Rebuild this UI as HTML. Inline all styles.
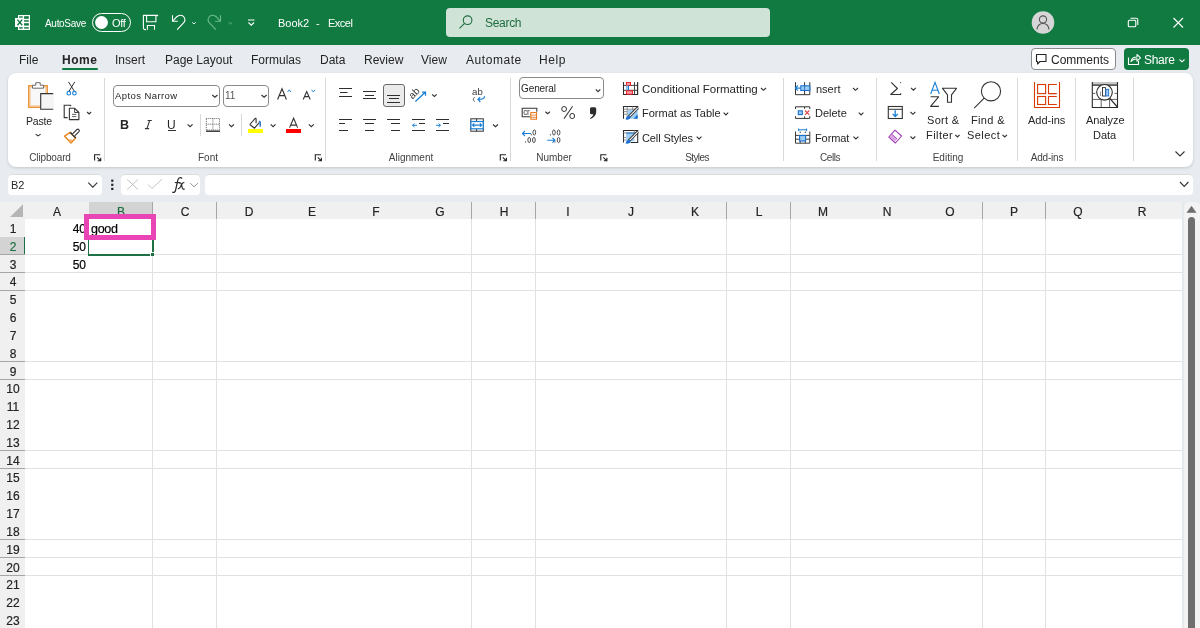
<!DOCTYPE html><html><head><meta charset="utf-8"><style>
html,body{margin:0;padding:0;width:1200px;height:628px;overflow:hidden;background:#e8ebef}
.a{position:absolute}
.t{position:absolute;white-space:pre;line-height:1;font-family:"Liberation Sans",sans-serif;will-change:transform}
svg{position:absolute;overflow:visible}
</style></head><body>
<div class="a" style="left:0px;top:0px;width:1200px;height:628px;background:#e8ecf0;"></div>
<div class="a" style="left:0px;top:0px;width:1200px;height:44.5px;background:#117a41;"></div>
<span class="t" style="left:45.00px;top:18.54px;font-size:10px;color:#fff;letter-spacing:-0.3px;">AutoSave</span>
<div class="a" style="left:92px;top:13.3px;width:39px;height:18.5px;background:transparent;border:1.3px solid #fff;border-radius:10px;box-sizing:border-box;"></div>
<span class="t" style="left:112.00px;top:17.69px;font-size:11px;color:#fff;letter-spacing:-0.3px;">Off</span>
<span class="t" style="left:278.30px;top:17.79px;font-size:11px;color:#fff;">Book2</span>
<span class="t" style="left:316.40px;top:17.79px;font-size:11px;color:#fff;">-</span>
<span class="t" style="left:328.40px;top:17.79px;font-size:11px;color:#fff;letter-spacing:-0.5px;">Excel</span>
<div class="a" style="left:446px;top:8px;width:324px;height:29px;background:#d0e3d7;border-radius:4px;"></div>
<span class="t" style="left:485.00px;top:16.84px;font-size:12px;color:#1d6b3e;letter-spacing:-0.3px;">Search</span>
<span class="t" style="left:19.20px;top:53.84px;font-size:12px;color:#242424;">File</span>
<span class="t" style="left:61.60px;top:53.84px;font-size:12px;color:#242424;font-weight:bold;letter-spacing:0.5px;">Home</span>
<span class="t" style="left:114.60px;top:53.84px;font-size:12px;color:#242424;">Insert</span>
<span class="t" style="left:164.80px;top:53.84px;font-size:12px;color:#242424;">Page Layout</span>
<span class="t" style="left:251.20px;top:53.84px;font-size:12px;color:#242424;">Formulas</span>
<span class="t" style="left:320.20px;top:53.84px;font-size:12px;color:#242424;">Data</span>
<span class="t" style="left:364.20px;top:53.84px;font-size:12px;color:#242424;">Review</span>
<span class="t" style="left:420.60px;top:53.84px;font-size:12px;color:#242424;">View</span>
<span class="t" style="left:465.90px;top:53.84px;font-size:12px;color:#242424;letter-spacing:0.55px;">Automate</span>
<span class="t" style="left:538.70px;top:53.84px;font-size:12px;color:#242424;letter-spacing:0.6px;">Help</span>
<div class="a" style="left:62px;top:68px;width:36px;height:2.2px;background:#117a41;border-radius:1px;"></div>
<div class="a" style="left:1031px;top:48px;width:85px;height:22px;background:#fff;border:1px solid #8a8a8a;border-radius:4px;box-sizing:border-box;"></div>
<span class="t" style="left:1050.50px;top:53.84px;font-size:12px;color:#242424;">Comments</span>
<div class="a" style="left:1124px;top:48px;width:65px;height:22px;background:#117a41;border-radius:4px;"></div>
<span class="t" style="left:1143.50px;top:53.84px;font-size:12px;color:#fff;letter-spacing:-0.3px;">Share</span>
<div class="a" style="left:8px;top:73px;width:1185px;height:93.5px;background:#fff;border-radius:8px;box-shadow:0 1px 3px rgba(0,0,0,0.16);"></div>
<div class="a" style="left:8px;top:174px;width:94px;height:21px;background:#fff;border-radius:4px;box-shadow:inset 0 1px 0 #dcdcdc;"></div>
<div class="a" style="left:121px;top:174px;width:79px;height:21px;background:#fff;border-radius:4px;box-shadow:inset 0 1px 0 #dcdcdc;"></div>
<div class="a" style="left:204.5px;top:174px;width:988px;height:21px;background:#fff;border-radius:4px;box-shadow:inset 0 1px 0 #dcdcdc;"></div>
<div class="a" style="left:0px;top:202px;width:1182.5px;height:426px;background:#fff;"></div>
<div class="a" style="left:0px;top:202px;width:1182.5px;height:16.5px;background:#f0f0f0;"></div>
<div class="a" style="left:0px;top:202px;width:25px;height:426px;background:#f0f0f0;"></div>
<div class="a" style="left:89px;top:202px;width:63.6px;height:16.5px;background:#d3d3d3;"></div>
<div class="a" style="left:0px;top:237px;width:25px;height:17.4px;background:#d3d3d3;"></div>
<div class="a" style="left:24px;top:237px;width:1.2px;height:17.4px;background:#1e7145;"></div>
<span class="t" style="left:-42.80px;width:200px;text-align:center;top:205.94px;font-size:12px;color:#242424;-webkit-text-stroke:0.2px #242424;">A</span>
<span class="t" style="left:21.00px;width:200px;text-align:center;top:205.94px;font-size:12px;color:#1e6e42;-webkit-text-stroke:0.2px #1e6e42;">B</span>
<span class="t" style="left:84.80px;width:200px;text-align:center;top:205.94px;font-size:12px;color:#242424;-webkit-text-stroke:0.2px #242424;">C</span>
<span class="t" style="left:148.60px;width:200px;text-align:center;top:205.94px;font-size:12px;color:#242424;-webkit-text-stroke:0.2px #242424;">D</span>
<span class="t" style="left:212.40px;width:200px;text-align:center;top:205.94px;font-size:12px;color:#242424;-webkit-text-stroke:0.2px #242424;">E</span>
<span class="t" style="left:276.20px;width:200px;text-align:center;top:205.94px;font-size:12px;color:#242424;-webkit-text-stroke:0.2px #242424;">F</span>
<span class="t" style="left:340.00px;width:200px;text-align:center;top:205.94px;font-size:12px;color:#242424;-webkit-text-stroke:0.2px #242424;">G</span>
<span class="t" style="left:403.80px;width:200px;text-align:center;top:205.94px;font-size:12px;color:#242424;-webkit-text-stroke:0.2px #242424;">H</span>
<span class="t" style="left:467.60px;width:200px;text-align:center;top:205.94px;font-size:12px;color:#242424;-webkit-text-stroke:0.2px #242424;">I</span>
<span class="t" style="left:531.40px;width:200px;text-align:center;top:205.94px;font-size:12px;color:#242424;-webkit-text-stroke:0.2px #242424;">J</span>
<span class="t" style="left:595.20px;width:200px;text-align:center;top:205.94px;font-size:12px;color:#242424;-webkit-text-stroke:0.2px #242424;">K</span>
<span class="t" style="left:659.00px;width:200px;text-align:center;top:205.94px;font-size:12px;color:#242424;-webkit-text-stroke:0.2px #242424;">L</span>
<span class="t" style="left:722.80px;width:200px;text-align:center;top:205.94px;font-size:12px;color:#242424;-webkit-text-stroke:0.2px #242424;">M</span>
<span class="t" style="left:786.60px;width:200px;text-align:center;top:205.94px;font-size:12px;color:#242424;-webkit-text-stroke:0.2px #242424;">N</span>
<span class="t" style="left:850.40px;width:200px;text-align:center;top:205.94px;font-size:12px;color:#242424;-webkit-text-stroke:0.2px #242424;">O</span>
<span class="t" style="left:914.20px;width:200px;text-align:center;top:205.94px;font-size:12px;color:#242424;-webkit-text-stroke:0.2px #242424;">P</span>
<span class="t" style="left:978.00px;width:200px;text-align:center;top:205.94px;font-size:12px;color:#242424;-webkit-text-stroke:0.2px #242424;">Q</span>
<span class="t" style="left:1041.80px;width:200px;text-align:center;top:205.94px;font-size:12px;color:#242424;-webkit-text-stroke:0.2px #242424;">R</span>
<span class="t" style="left:-87.50px;width:200px;text-align:center;top:223.04px;font-size:12px;color:#242424;-webkit-text-stroke:0.2px #242424;">1</span>
<span class="t" style="left:-87.50px;width:200px;text-align:center;top:240.86px;font-size:12px;color:#1e6e42;-webkit-text-stroke:0.2px #1e6e42;">2</span>
<span class="t" style="left:-87.50px;width:200px;text-align:center;top:258.67px;font-size:12px;color:#242424;-webkit-text-stroke:0.2px #242424;">3</span>
<span class="t" style="left:-87.50px;width:200px;text-align:center;top:276.49px;font-size:12px;color:#242424;-webkit-text-stroke:0.2px #242424;">4</span>
<span class="t" style="left:-87.50px;width:200px;text-align:center;top:294.30px;font-size:12px;color:#242424;-webkit-text-stroke:0.2px #242424;">5</span>
<span class="t" style="left:-87.50px;width:200px;text-align:center;top:312.12px;font-size:12px;color:#242424;-webkit-text-stroke:0.2px #242424;">6</span>
<span class="t" style="left:-87.50px;width:200px;text-align:center;top:329.93px;font-size:12px;color:#242424;-webkit-text-stroke:0.2px #242424;">7</span>
<span class="t" style="left:-87.50px;width:200px;text-align:center;top:347.75px;font-size:12px;color:#242424;-webkit-text-stroke:0.2px #242424;">8</span>
<span class="t" style="left:-87.50px;width:200px;text-align:center;top:365.56px;font-size:12px;color:#242424;-webkit-text-stroke:0.2px #242424;">9</span>
<span class="t" style="left:-87.50px;width:200px;text-align:center;top:383.38px;font-size:12px;color:#242424;-webkit-text-stroke:0.2px #242424;">10</span>
<span class="t" style="left:-87.50px;width:200px;text-align:center;top:401.19px;font-size:12px;color:#242424;-webkit-text-stroke:0.2px #242424;">11</span>
<span class="t" style="left:-87.50px;width:200px;text-align:center;top:419.01px;font-size:12px;color:#242424;-webkit-text-stroke:0.2px #242424;">12</span>
<span class="t" style="left:-87.50px;width:200px;text-align:center;top:436.82px;font-size:12px;color:#242424;-webkit-text-stroke:0.2px #242424;">13</span>
<span class="t" style="left:-87.50px;width:200px;text-align:center;top:454.64px;font-size:12px;color:#242424;-webkit-text-stroke:0.2px #242424;">14</span>
<span class="t" style="left:-87.50px;width:200px;text-align:center;top:472.45px;font-size:12px;color:#242424;-webkit-text-stroke:0.2px #242424;">15</span>
<span class="t" style="left:-87.50px;width:200px;text-align:center;top:490.27px;font-size:12px;color:#242424;-webkit-text-stroke:0.2px #242424;">16</span>
<span class="t" style="left:-87.50px;width:200px;text-align:center;top:508.08px;font-size:12px;color:#242424;-webkit-text-stroke:0.2px #242424;">17</span>
<span class="t" style="left:-87.50px;width:200px;text-align:center;top:525.90px;font-size:12px;color:#242424;-webkit-text-stroke:0.2px #242424;">18</span>
<span class="t" style="left:-87.50px;width:200px;text-align:center;top:543.71px;font-size:12px;color:#242424;-webkit-text-stroke:0.2px #242424;">19</span>
<span class="t" style="left:-87.50px;width:200px;text-align:center;top:561.53px;font-size:12px;color:#242424;-webkit-text-stroke:0.2px #242424;">20</span>
<span class="t" style="left:-87.50px;width:200px;text-align:center;top:579.34px;font-size:12px;color:#242424;-webkit-text-stroke:0.2px #242424;">21</span>
<span class="t" style="left:-87.50px;width:200px;text-align:center;top:597.16px;font-size:12px;color:#242424;-webkit-text-stroke:0.2px #242424;">22</span>
<span class="t" style="left:-87.50px;width:200px;text-align:center;top:614.97px;font-size:12px;color:#242424;-webkit-text-stroke:0.2px #242424;">23</span>
<div class="a" style="left:152.1px;top:218.5px;width:1px;height:410px;background:#e1e1e1;"></div>
<div class="a" style="left:152.1px;top:202px;width:1px;height:16.5px;background:#a6a6a6;"></div>
<div class="a" style="left:215.9px;top:218.5px;width:1px;height:410px;background:#e1e1e1;"></div>
<div class="a" style="left:215.9px;top:202px;width:1px;height:16.5px;background:#a6a6a6;"></div>
<div class="a" style="left:471.1px;top:218.5px;width:1px;height:410px;background:#e1e1e1;"></div>
<div class="a" style="left:471.1px;top:202px;width:1px;height:16.5px;background:#a6a6a6;"></div>
<div class="a" style="left:534.9px;top:218.5px;width:1px;height:410px;background:#e1e1e1;"></div>
<div class="a" style="left:534.9px;top:202px;width:1px;height:16.5px;background:#a6a6a6;"></div>
<div class="a" style="left:726.3px;top:218.5px;width:1px;height:410px;background:#e1e1e1;"></div>
<div class="a" style="left:726.3px;top:202px;width:1px;height:16.5px;background:#a6a6a6;"></div>
<div class="a" style="left:790.1px;top:218.5px;width:1px;height:410px;background:#e1e1e1;"></div>
<div class="a" style="left:790.1px;top:202px;width:1px;height:16.5px;background:#a6a6a6;"></div>
<div class="a" style="left:981.5px;top:218.5px;width:1px;height:410px;background:#e1e1e1;"></div>
<div class="a" style="left:981.5px;top:202px;width:1px;height:16.5px;background:#a6a6a6;"></div>
<div class="a" style="left:1045.3px;top:218.5px;width:1px;height:410px;background:#e1e1e1;"></div>
<div class="a" style="left:1045.3px;top:202px;width:1px;height:16.5px;background:#a6a6a6;"></div>
<div class="a" style="left:25px;top:254.1px;width:1157.5px;height:1px;background:#e1e1e1;"></div>
<div class="a" style="left:0px;top:254.1px;width:25px;height:1px;background:#a6a6a6;"></div>
<div class="a" style="left:25px;top:271.9px;width:1157.5px;height:1px;background:#e1e1e1;"></div>
<div class="a" style="left:0px;top:271.9px;width:25px;height:1px;background:#a6a6a6;"></div>
<div class="a" style="left:25px;top:289.8px;width:1157.5px;height:1px;background:#e1e1e1;"></div>
<div class="a" style="left:0px;top:289.8px;width:25px;height:1px;background:#a6a6a6;"></div>
<div class="a" style="left:25px;top:361.0px;width:1157.5px;height:1px;background:#e1e1e1;"></div>
<div class="a" style="left:0px;top:361.0px;width:25px;height:1px;background:#a6a6a6;"></div>
<div class="a" style="left:25px;top:378.8px;width:1157.5px;height:1px;background:#e1e1e1;"></div>
<div class="a" style="left:0px;top:378.8px;width:25px;height:1px;background:#a6a6a6;"></div>
<div class="a" style="left:25px;top:450.1px;width:1157.5px;height:1px;background:#e1e1e1;"></div>
<div class="a" style="left:0px;top:450.1px;width:25px;height:1px;background:#a6a6a6;"></div>
<div class="a" style="left:25px;top:467.9px;width:1157.5px;height:1px;background:#e1e1e1;"></div>
<div class="a" style="left:0px;top:467.9px;width:25px;height:1px;background:#a6a6a6;"></div>
<div class="a" style="left:25px;top:539.2px;width:1157.5px;height:1px;background:#e1e1e1;"></div>
<div class="a" style="left:0px;top:539.2px;width:25px;height:1px;background:#a6a6a6;"></div>
<div class="a" style="left:25px;top:557.0px;width:1157.5px;height:1px;background:#e1e1e1;"></div>
<div class="a" style="left:0px;top:557.0px;width:25px;height:1px;background:#a6a6a6;"></div>
<div class="a" style="left:25px;top:574.8px;width:1157.5px;height:1px;background:#e1e1e1;"></div>
<div class="a" style="left:0px;top:574.8px;width:25px;height:1px;background:#a6a6a6;"></div>
<div class="a" style="left:1182px;top:202px;width:2px;height:426px;background:#e6e9ec;"></div>
<div class="a" style="left:1184px;top:202px;width:16px;height:426px;background:#f3f3f3;border-radius:5px 5px 0 0;"></div>
<div class="a" style="left:1188px;top:216.6px;width:7px;height:420px;background:#6e6e6e;border-radius:3.5px 3.5px 0 0;"></div>
<span class="t" style="left:-113.70px;width:200px;text-align:right;top:223.34px;font-size:12px;color:#000;-webkit-text-stroke:0.2px #000;">40</span>
<span class="t" style="left:-113.70px;width:200px;text-align:right;top:241.14px;font-size:12px;color:#000;-webkit-text-stroke:0.2px #000;">50</span>
<span class="t" style="left:-113.70px;width:200px;text-align:right;top:258.94px;font-size:12px;color:#000;-webkit-text-stroke:0.2px #000;">50</span>
<span class="t" style="left:90.50px;top:223.32px;font-size:12.5px;color:#000;letter-spacing:-0.3px;-webkit-text-stroke:0.2px #000;">good</span>
<div class="a" style="left:88px;top:236px;width:1.3px;height:19.8px;background:#1e7145;"></div>
<div class="a" style="left:88px;top:254px;width:61.8px;height:2px;background:#1e7145;"></div>
<div class="a" style="left:152px;top:236px;width:2px;height:15.8px;background:#1e7145;"></div>
<div class="a" style="left:151px;top:253px;width:3px;height:3px;background:#1e7145;"></div>
<div class="a" style="left:84px;top:214px;width:72px;height:26px;background:transparent;border:5px solid #ea45b4;box-sizing:border-box;"></div>
<div class="a" style="left:104.1px;top:78px;width:1px;height:83px;background:#d9d9d9;"></div>
<div class="a" style="left:325.3px;top:78px;width:1px;height:83px;background:#d9d9d9;"></div>
<div class="a" style="left:510.3px;top:78px;width:1px;height:83px;background:#d9d9d9;"></div>
<div class="a" style="left:783.0px;top:78px;width:1px;height:83px;background:#d9d9d9;"></div>
<div class="a" style="left:875.8px;top:78px;width:1px;height:83px;background:#d9d9d9;"></div>
<div class="a" style="left:1016.7px;top:78px;width:1px;height:83px;background:#d9d9d9;"></div>
<div class="a" style="left:1075.1px;top:78px;width:1px;height:83px;background:#d9d9d9;"></div>
<div class="a" style="left:1133.2px;top:78px;width:1px;height:83px;background:#d9d9d9;"></div>
<span class="t" style="left:-49.60px;width:200px;text-align:center;top:152.84px;font-size:10px;color:#424242;letter-spacing:-0.15px;">Clipboard</span>
<span class="t" style="left:108.20px;width:200px;text-align:center;top:152.84px;font-size:10px;color:#424242;letter-spacing:0px;">Font</span>
<span class="t" style="left:310.50px;width:200px;text-align:center;top:152.84px;font-size:10px;color:#424242;letter-spacing:0px;">Alignment</span>
<span class="t" style="left:453.50px;width:200px;text-align:center;top:152.84px;font-size:10px;color:#424242;letter-spacing:0px;">Number</span>
<span class="t" style="left:597.40px;width:200px;text-align:center;top:152.84px;font-size:10px;color:#424242;letter-spacing:-0.6px;">Styles</span>
<span class="t" style="left:729.50px;width:200px;text-align:center;top:152.84px;font-size:10px;color:#424242;letter-spacing:-0.45px;">Cells</span>
<span class="t" style="left:847.50px;width:200px;text-align:center;top:152.84px;font-size:10px;color:#424242;letter-spacing:0px;">Editing</span>
<span class="t" style="left:946.80px;width:200px;text-align:center;top:152.84px;font-size:10px;color:#424242;letter-spacing:-0.2px;">Add-ins</span>
<span class="t" style="left:25.70px;top:115.91px;font-size:10.5px;color:#262626;letter-spacing:-0.2px;">Paste</span>
<div class="a" style="left:113px;top:84.5px;width:107.3px;height:22px;background:#fff;border:1px solid #8a8a8a;border-radius:4px;box-sizing:border-box;"></div>
<span class="t" style="left:115.00px;top:90.96px;font-size:9.5px;color:#262626;letter-spacing:0.42px;">Aptos Narrow</span>
<div class="a" style="left:223.3px;top:84.5px;width:46.2px;height:22px;background:#fff;border:1px solid #8a8a8a;border-radius:4px;box-sizing:border-box;"></div>
<span class="t" style="left:225.20px;top:90.53px;font-size:10px;color:#555;">11</span>
<span class="t" style="left:120.00px;top:118.52px;font-size:12.5px;color:#262626;font-weight:bold;">B</span>
<span class="t" style="left:167.20px;top:118.94px;font-size:12px;color:#262626;">U</span>
<div class="a" style="left:168px;top:130.2px;width:8px;height:1px;background:#333;"></div>
<div class="a" style="left:200px;top:114px;width:1px;height:22.3px;background:#d9d9d9;"></div>
<div class="a" style="left:241px;top:114.3px;width:1px;height:22px;background:#d9d9d9;"></div>
<div class="a" style="left:248px;top:129px;width:15px;height:3.8px;background:#ffff00;"></div>
<div class="a" style="left:286px;top:129px;width:15px;height:3.8px;background:#ff0000;"></div>
<div class="a" style="left:383.3px;top:84.2px;width:21.5px;height:22.5px;background:#ebebeb;border:1px solid #6a6a6a;border-radius:3px;box-sizing:border-box;"></div>
<div class="a" style="left:519.4px;top:77.3px;width:84.2px;height:21.5px;background:#fff;border:1px solid #8a8a8a;border-radius:4px;box-sizing:border-box;"></div>
<span class="t" style="left:521.00px;top:83.94px;font-size:10px;color:#262626;letter-spacing:-0.1px;">General</span>
<span class="t" style="left:641.50px;top:84.27px;font-size:11.5px;color:#262626;">Conditional Formatting</span>
<span class="t" style="left:641.50px;top:108.19px;font-size:11px;color:#262626;">Format as Table</span>
<span class="t" style="left:641.50px;top:132.79px;font-size:11px;color:#262626;letter-spacing:-0.1px;">Cell Styles</span>
<span class="t" style="left:816.30px;top:84.49px;font-size:11px;color:#262626;">nsert</span>
<span class="t" style="left:814.50px;top:108.19px;font-size:11px;color:#262626;">Delete</span>
<span class="t" style="left:814.50px;top:132.79px;font-size:11px;color:#262626;letter-spacing:-0.1px;">Format</span>
<span class="t" style="left:927.30px;top:114.89px;font-size:11px;color:#262626;letter-spacing:0.3px;">Sort &amp;</span>
<span class="t" style="left:926.20px;top:129.69px;font-size:11px;color:#262626;letter-spacing:0.45px;">Filter</span>
<span class="t" style="left:970.50px;top:114.89px;font-size:11px;color:#262626;letter-spacing:0.35px;">Find &amp;</span>
<span class="t" style="left:967.30px;top:129.69px;font-size:11px;color:#262626;letter-spacing:0.45px;">Select</span>
<span class="t" style="left:1027.50px;top:114.69px;font-size:11px;color:#262626;">Add-ins</span>
<span class="t" style="left:1086.00px;top:114.69px;font-size:11px;color:#262626;letter-spacing:-0.1px;">Analyze</span>
<span class="t" style="left:1093.30px;top:129.69px;font-size:11px;color:#262626;">Data</span>
<span class="t" style="left:11.20px;top:180.09px;font-size:11px;color:#262626;">B2</span>
<svg class="a" style="left:0;top:0" width="1200" height="628" viewBox="0 0 1200 628"><path d="M18 15h12v15h-12v-3h-3v-9h3z" fill="#fff"/><g fill="#117a41"><rect x="19.2" y="16.3" width="3.5" height="1.4"/><rect x="19.2" y="27.2" width="3.5" height="1.4"/><rect x="24.1" y="16.2" width="4.7" height="2.6"/><rect x="24.1" y="20.2" width="4.7" height="1.5"/><rect x="24.1" y="23.2" width="4.7" height="2.4"/><rect x="24.1" y="27.2" width="4.7" height="1.4"/></g><path d="M17.4 19.6l4.8 5.6M22.2 19.6l-4.8 5.6" stroke="#117a41" stroke-width="1.4"/><circle cx="101.5" cy="22.5" r="6.4" fill="#fff"/><path d="M157.6 16.3v-0.9h-14.2v12.4a1.8 1.8 0 0 0 1.8 1.8h0.8M146.6 15.5v6.2h9.3v-6.2M147.4 29.7v-4.2h7.1v4.2" fill="none" stroke="#fff" stroke-width="1.1"/><path d="M172.5 15.2v6h5.3" fill="none" stroke="#fff" stroke-width="1.1"/><path d="M173 20.8l3.5-3.8c2.5-2.5 6-2.3 7.6 0.2 1.3 2 1 4-0.6 5.8l-6.3 6.6" fill="none" stroke="#fff" stroke-width="1.1"/><path d="M192.2 22.3l1.8 1.7 1.8-1.7" fill="none" stroke="#fff" stroke-width="0.9"/><path d="M220.5 15.2v6h-5.3" fill="none" stroke="#6cba8d" stroke-width="1.1"/><path d="M220 20.8l-3.5-3.8c-2.5-2.5-6-2.3-7.6 0.2-1.3 2-1 4 0.6 5.8l6.3 6.6" fill="none" stroke="#6cba8d" stroke-width="1.1"/><path d="M228.6 22.3l1.8 1.7 1.8-1.7" fill="none" stroke="#6cba8d" stroke-width="0.9"/><path d="M248 20h6.5M248.5 22.5l2.75 2.75 2.75-2.75" fill="none" stroke="#fff" stroke-width="1.1"/><circle cx="467.6" cy="20.2" r="4.3" fill="none" stroke="#1d6b3e" stroke-width="1.1"/><path d="M464.5 23.3l-5 5" stroke="#1d6b3e" stroke-width="1.1"/><circle cx="1043" cy="22.5" r="11.3" fill="#d6d6d6"/><circle cx="1043" cy="19.5" r="3.6" fill="none" stroke="#555" stroke-width="1.1"/><path d="M1037 29.5c0.5-4 2.5-6 6-6s5.5 2 6 6" fill="none" stroke="#555" stroke-width="1.1"/><rect x="1128.3" y="20.3" width="7.5" height="6.5" rx="1" fill="none" stroke="#fff" stroke-width="1.1"/><path d="M1130.5 18.3h5.5a1.8 1.8 0 0 1 1.8 1.8v5" fill="none" stroke="#fff" stroke-width="1.1"/><path d="M1173.5 18l9.5 9.5M1183 18l-9.5 9.5" stroke="#fff" stroke-width="1.1"/><path d="M1036.5 54.5h9.5v7h-6l-2.5 2.5v-2.5h-1z" fill="none" stroke="#242424" stroke-width="1.1" stroke-linejoin="round"/><path d="M1128.5 57.5v7h10v-3.5" fill="none" stroke="#fff" stroke-width="1.1"/><path d="M1131 61.5c0.5-3 2.5-4.5 6-4.5v-2.5l3.5 3.3-3.5 3.3v-2.3c-2.5 0-4.5 1-6 2.7z" fill="none" stroke="#fff" stroke-width="1.1" stroke-linejoin="round"/><path d="M1179.5 59.5l2.5 2.3 2.5-2.3" fill="none" stroke="#fff" stroke-width="1.1"/><path d="M10 217h13v-12.8z" fill="#b5b5b5"/><path d="M1187 212.5l4.5-6.3 4.5 6.3z" fill="#6e6e6e" stroke="#6e6e6e" stroke-width="0.6" stroke-linejoin="round"/><path d="M94.6 160.6v-5.8h5.6M97.1 157.3l3.6 3.6M97.6 160.8h3.1v-3.1" fill="none" stroke="#222" stroke-width="1.1"/><path d="M315.3 160.6v-5.8h5.6M317.8 157.3l3.6 3.6M318.3 160.8h3.1v-3.1" fill="none" stroke="#222" stroke-width="1.1"/><path d="M500.3 160.6v-5.8h5.6M502.8 157.3l3.6 3.6M503.3 160.8h3.1v-3.1" fill="none" stroke="#222" stroke-width="1.1"/><path d="M600.8 160.6v-5.8h5.6M603.3 157.3l3.6 3.6M603.8 160.8h3.1v-3.1" fill="none" stroke="#222" stroke-width="1.1"/><rect x="28.8" y="85.8" width="18.4" height="21.4" fill="#f8f8f8" stroke="#e8841a" stroke-width="1.3"/><rect x="30.2" y="87.2" width="15.6" height="18.6" fill="none" stroke="#f6c98f" stroke-width="0.8"/><path d="M32.5 88.2v-3h3.3v-2.5h4.4v2.5h3.3v3z" fill="#fff" stroke="#6a6a6a" stroke-width="1.0" stroke-linejoin="round"/><path d="M54 93.6h-13.3v15.6h13.3z" fill="#f5f5f5"/><path d="M53.2 93.6h-12.5v15.6h12.5" fill="none" stroke="#333" stroke-width="1.1"/><path d="M35.6 134.1l2.5 1.8 2.5 -1.8" fill="none" stroke="#333" stroke-width="1.15"/><path d="M68.5 81.8l5.8 9.4M74.8 81.8l-5.8 9.4" stroke="#333" stroke-width="1.0" fill="none"/><circle cx="68.8" cy="93.2" r="1.8" fill="none" stroke="#1a7fd4" stroke-width="1.1"/><circle cx="74.4" cy="93.2" r="1.8" fill="none" stroke="#1a7fd4" stroke-width="1.1"/><path d="M67.6 117.6h-3.4v-12.3h6.2l0.6 0.8" fill="none" stroke="#333" stroke-width="1.1"/><path d="M69.4 108.3h5.3l4.2 4.2v7.1h-9.5z" fill="#fff" stroke="#333" stroke-width="1.1" stroke-linejoin="round"/><path d="M74.6 108.3v4.2h4.2" fill="none" stroke="#333" stroke-width="0.9"/><path d="M72 114.4h4.3M72 116.6h4.3" stroke="#555" stroke-width="0.9"/><path d="M87.1 112l2.0 1.9 2.0 -1.9" fill="none" stroke="#333" stroke-width="1.15"/><path d="M70.2 132.4l-5.6 3.8 6.4 6.8 4.6-5z" fill="#fff" stroke="#e8841a" stroke-width="1.4" stroke-linejoin="round"/><path d="M67.8 139.2l3.2 3.4 1.6-3.2z" fill="#f5b56a"/><path d="M70.2 132.3l5.5 5.8" stroke="#333" stroke-width="1.4"/><path d="M72.6 133.8l4.3-4.3a1.5 1.5 0 0 1 2.1 2.1l-4.3 4.3" fill="#fff" stroke="#333" stroke-width="1.1"/><path d="M212.3 95l2.6 2.3 2.6 -2.3" fill="none" stroke="#333" stroke-width="1.15"/><path d="M261.5 95l2.6 2.3 2.6 -2.3" fill="none" stroke="#333" stroke-width="1.15"/><path d="M277.6 99.5l4.4-10.7 4.4 10.7M279.3 95.6h5.4" fill="none" stroke="#333" stroke-width="1.15"/><path d="M287.6 92l1.6-2.2 1.6 2.2" fill="none" stroke="#1a7fd4" stroke-width="0.9"/><path d="M303.2 99.5l3.5-8 3.5 8M304.5 96.6h4.4" fill="none" stroke="#333" stroke-width="1.1"/><path d="M311.5 89.8l1.8 2.2 1.8-2.2" fill="none" stroke="#1a7fd4" stroke-width="0.9"/><path d="M149.6 120.6l-2.6 8M147.6 120.5h4.2M144.9 128.6h4.2" fill="none" stroke="#333" stroke-width="1.1"/><path d="M187.6 124.4l2.5 2.3 2.5 -2.3" fill="none" stroke="#333" stroke-width="1.15"/><rect x="206.3" y="118.5" width="13.2" height="11.5" fill="none" stroke="#555" stroke-width="0.9" stroke-dasharray="1 1"/><path d="M212.9 118.5v11.5M206.3 124.2h13.2" stroke="#555" stroke-width="0.9" stroke-dasharray="1 1"/><path d="M206 131.2h14" stroke="#242424" stroke-width="1.3"/><path d="M229 124.4l2.5 2.3 2.5 -2.3" fill="none" stroke="#333" stroke-width="1.15"/><path d="M249.8 124.5l5.4-6.1c0.5-0.4 0.9-0.2 0.9 0.4v4.4M259.3 122.6l-4.8 5.6-4.7-3.7" fill="#fafafa" stroke="#333" stroke-width="1.1" stroke-linejoin="round"/><path d="M258.8 121.6c0.8-0.4 1.4 0 1.4 0.9v4.2" fill="none" stroke="#1a6fd0" stroke-width="1.4"/><path d="M270.7 124.4l2.4 2.3 2.4 -2.3" fill="none" stroke="#333" stroke-width="1.15"/><path d="M289.6 127.6l4-9.4 4 9.4M290.9 125.1h5.4" fill="none" stroke="#333" stroke-width="1.1"/><path d="M308.8 124.4l2.5 2.3 2.5 -2.3" fill="none" stroke="#333" stroke-width="1.15"/><path d="M339 88.5h13" stroke="#2e2e2e" stroke-width="1.0"/><path d="M340 92.5h7.5" stroke="#2e2e2e" stroke-width="1.0"/><path d="M339 96.5h13" stroke="#2e2e2e" stroke-width="1.0"/><path d="M363 91.5h13" stroke="#2e2e2e" stroke-width="1.0"/><path d="M365 95.5h9" stroke="#2e2e2e" stroke-width="1.0"/><path d="M363 98.5h13" stroke="#2e2e2e" stroke-width="1.0"/><path d="M387 95.5h13" stroke="#2e2e2e" stroke-width="1.0"/><path d="M389 98.5h10" stroke="#2e2e2e" stroke-width="1.0"/><path d="M387 102.5h13" stroke="#2e2e2e" stroke-width="1.0"/><text x="0" y="0" transform="translate(412.6,99.4) rotate(-45)" font-family="Liberation Sans" font-size="10" fill="#333">ab</text><path d="M415.4 101.5l9.8-9.2M422 92.1h3.5v3.6" fill="none" stroke="#1a7fd4" stroke-width="1.3"/><path d="M432.1 94.4l2.3 2.1 2.3 -2.1" fill="none" stroke="#333" stroke-width="1.15"/><path d="M339 119.5h13" stroke="#2e2e2e" stroke-width="1.0"/><path d="M339 123.5h6" stroke="#2e2e2e" stroke-width="1.0"/><path d="M339 130.5h9" stroke="#2e2e2e" stroke-width="1.0"/><path d="M363 119.5h13" stroke="#2e2e2e" stroke-width="1.0"/><path d="M365 123.5h9" stroke="#2e2e2e" stroke-width="1.0"/><path d="M365 130.5h9" stroke="#2e2e2e" stroke-width="1.0"/><path d="M387 119.5h13" stroke="#2e2e2e" stroke-width="1.0"/><path d="M391 123.5h9" stroke="#2e2e2e" stroke-width="1.0"/><path d="M391 130.5h9" stroke="#2e2e2e" stroke-width="1.0"/><path d="M412 119.5h13" stroke="#2e2e2e" stroke-width="1.0"/><path d="M419 123.5h6" stroke="#2e2e2e" stroke-width="1.0"/><path d="M412 130.5h13" stroke="#2e2e2e" stroke-width="1.0"/><path d="M417 125.3h-4.5M414.5 123.5l-2 1.8 2 1.8" fill="none" stroke="#1a7fd4" stroke-width="1.0"/><path d="M436 119.5h13" stroke="#2e2e2e" stroke-width="1.0"/><path d="M443 123.5h6" stroke="#2e2e2e" stroke-width="1.0"/><path d="M436 130.5h13" stroke="#2e2e2e" stroke-width="1.0"/><path d="M436 125.3h4.5M438.5 123.5l2 1.8-2 1.8" fill="none" stroke="#1a7fd4" stroke-width="1.0"/><text x="472" y="95.4" font-family="Liberation Sans" font-size="9.6" fill="#3a3a3a" letter-spacing="0.2">ab</text><path d="M474.8 97.3a2.2 2.2 0 0 0 0 4.2" fill="none" stroke="#555" stroke-width="0.9"/><path d="M484.6 96.2c0 2.2-1.8 3.2-6.2 3.2M480.2 97.2l-2.2 2.2 2.3 2.6" fill="none" stroke="#1a7fd4" stroke-width="1.2"/><rect x="470.8" y="118.8" width="12.5" height="12.4" fill="#fff" stroke="#333" stroke-width="1"/><path d="M476.6 118.8v2.8M476.6 128.7v2.5" stroke="#333" stroke-width="1"/><rect x="470.9" y="121.5" width="12.3" height="7.3" fill="#fff" stroke="#1a7fd4" stroke-width="1.2"/><path d="M472.5 125.1h9.2M474.3 123.3l-1.8 1.8 1.8 1.8M479.9 123.3l1.8 1.8-1.8 1.8" fill="none" stroke="#1a7fd4" stroke-width="1.1"/><path d="M493 124.5l2.5 2.2 2.5 -2.2" fill="none" stroke="#333" stroke-width="1.15"/><path d="M595.8 89.3l2.25 2.3 2.25 -2.3" fill="none" stroke="#333" stroke-width="1.15"/><path d="M530 116.7h-7.8v-8.4h14.6v3.5" fill="none" stroke="#333" stroke-width="1.05"/><text x="523.2" y="115" font-family="Liberation Sans" font-size="8.2" fill="#333" letter-spacing="-0.2">cr</text><path d="M531 114.6v-0.6" stroke="#333" stroke-width="0.8"/><rect x="530.8" y="112.6" width="5.8" height="6.6" fill="#fff" stroke="#e36c0a" stroke-width="0.95"/><path d="M530.8 115.1h5.8M530.8 117.3h5.8" stroke="#e36c0a" stroke-width="0.8"/><path d="M545.4 111.8l2.25 1.9 2.25 -1.9" fill="none" stroke="#333" stroke-width="1.15"/><path d="M564 118.8l8.6-12.6" stroke="#333" stroke-width="1.05"/><ellipse cx="564.1" cy="109" rx="2.4" ry="2.5" fill="none" stroke="#333" stroke-width="1.0"/><ellipse cx="572.2" cy="116" rx="2.4" ry="2.6" fill="none" stroke="#333" stroke-width="1.0"/><path d="M591.5 107.3h3.2a1.5 1.5 0 0 1 1.5 1.5v3.2c0 3-2.2 5.6-5.8 6.9l-0.4-0.7c1.8-1 3-2.4 3.4-3.9h-1.9a1.5 1.5 0 0 1-1.5-1.5v-4a1.5 1.5 0 0 1 1.5-1.5z" fill="#2b2b2b"/><path d="M522.6 133.5h8.4M524.9 131l-2.4 2.5 2.4 2.5" fill="none" stroke="#1a7fd4" stroke-width="1.15"/><rect x="530.8" y="134.3" width="1" height="1.1" fill="#333"/><ellipse cx="534.3" cy="132.5" rx="1.35" ry="2.6" fill="none" stroke="#333" stroke-width="0.85"/><rect x="525.1" y="141.4" width="1" height="1.1" fill="#333"/><ellipse cx="529.2" cy="140" rx="1.35" ry="2.6" fill="none" stroke="#333" stroke-width="0.85"/><ellipse cx="533.9" cy="140" rx="1.35" ry="2.6" fill="none" stroke="#333" stroke-width="0.85"/><rect x="549.9" y="134.3" width="1" height="1.1" fill="#333"/><ellipse cx="553.9" cy="132.5" rx="1.35" ry="2.6" fill="none" stroke="#333" stroke-width="0.85"/><ellipse cx="558.6" cy="132.5" rx="1.35" ry="2.6" fill="none" stroke="#333" stroke-width="0.85"/><path d="M547.2 140.2h7.6M552.5 137.8l2.4 2.4-2.4 2.4" fill="none" stroke="#1a7fd4" stroke-width="1.15"/><rect x="554.5" y="141.4" width="1" height="1.1" fill="#333"/><ellipse cx="558.6" cy="140" rx="1.35" ry="2.6" fill="none" stroke="#333" stroke-width="0.85"/><path d="M623.5 82.2v12.3h14.1v-12.3M623.5 85.4h14.1M623.5 90.3h14.1M634.5 82.2v12.3" fill="none" stroke="#444" stroke-width="1"/><path d="M623.5 82.2v12.3h14.1v-12.3" fill="none" stroke="#2a2a2a" stroke-width="1.05"/><rect x="626.4" y="82.5" width="4.2" height="2.9" fill="#f9a0a8" stroke="#e8101a" stroke-width="0.9"/><rect x="626" y="85.6" width="2.9" height="4.6" fill="#8cc4f0"/><path d="M628.5 85.6v4.6" stroke="#1a6fd0" stroke-width="0.9"/><rect x="626.4" y="90.8" width="6" height="3.4" fill="#f9a0a8" stroke="#e8101a" stroke-width="0.9"/><path d="M761 88l2.5 2.3 2.5 -2.3" fill="none" stroke="#333" stroke-width="1.15"/><path d="M623.5 118.7v-12.2h14.2v3" fill="none" stroke="#2a2a2a" stroke-width="1.05"/><path d="M627.2 106.5v12M632.7 106.5v3.5M623.5 109.2h14M623.5 111.6h4M623.5 114.2h4" fill="none" stroke="#777" stroke-width="0.8"/><rect x="627.6" y="110" width="10.1" height="8.7" fill="#9fcdf2"/><path d="M633.5 118.7l4.2-4.4v4.4z" fill="#1a6fd0"/><path d="M629 116.8l8.8-9" stroke="#2a2a2a" stroke-width="2.8"/><path d="M629 116.8l8.8-9" stroke="#fff" stroke-width="1.1"/><path d="M625.5 119.6c0.6-2.4 1.8-3.6 3.8-3.8l1.3 1.2c-0.3 2.2-2 3-5.1 2.6z" fill="#1a6fd0"/><path d="M723.6 112.6l2.3 2.3 2.3 -2.3" fill="none" stroke="#333" stroke-width="1.15"/><path d="M623.5 142.5v-12.1h14.2v12.1h-7" fill="none" stroke="#2a2a2a" stroke-width="1.05"/><path d="M623.5 132.9h14.2M623.5 137.5h2.5M623.5 140h2.5M634.3 130.4v2.5" fill="none" stroke="#777" stroke-width="0.8"/><rect x="626.2" y="133" width="8.2" height="8.2" fill="#9fcdf2"/><path d="M626.2 133.1h8.2" stroke="#1a6fd0" stroke-width="1"/><path d="M629 140.8l8.8-9" stroke="#2a2a2a" stroke-width="2.8"/><path d="M629 140.8l8.8-9" stroke="#fff" stroke-width="1.1"/><path d="M625.5 143.6c0.6-2.4 1.8-3.6 3.8-3.8l1.3 1.2c-0.3 2.2-2 3-5.1 2.6z" fill="#1a6fd0"/><path d="M696.7 136.6l2.4 2.3 2.4 -2.3" fill="none" stroke="#333" stroke-width="1.15"/><path d="M795.5 82.2v12.5h14.3v-12.5M804.6 82.2v12.5" fill="none" stroke="#333" stroke-width="1"/><rect x="800.8" y="85.8" width="9" height="4.7" fill="#9fcdf2" stroke="#1a6fd0" stroke-width="1.1"/><path d="M804.6 85.8v4.7" stroke="#1a6fd0" stroke-width="0.9"/><path d="M800.5 88.1h-5M797.9 85.5l-2.6 2.6 2.6 2.6" fill="none" stroke="#1a7fd4" stroke-width="1.1"/><path d="M853 88l2.5 2.3 2.5 -2.3" fill="none" stroke="#333" stroke-width="1.15"/><path d="M795.5 109v-2.2h14.3v2.2M795.5 116.2v2.2h14.3v-2.2M804.6 106.8v2M804.6 116.4v2" fill="none" stroke="#333" stroke-width="1"/><rect x="798.3" y="110.8" width="4" height="3.8" fill="#9fcdf2" stroke="#1a6fd0" stroke-width="1.1"/><path d="M805 110.5l4.3 4.3M809.3 110.5l-4.3 4.3" fill="none" stroke="#e8434f" stroke-width="1.1"/><path d="M858.8 112.6l2.3 2.3 2.3 -2.3" fill="none" stroke="#333" stroke-width="1.15"/><path d="M795.5 131.5v11.7h14.3v-11.7M795.5 135.4h14.3M795.5 139.2h14.3M800.2 135.4v7.8M805.3 135.4v7.8M800.2 131.5v1.5M805.3 131.5v1.5" fill="none" stroke="#333" stroke-width="0.95"/><rect x="799.6" y="135.5" width="6" height="5.5" fill="#9fcdf2" stroke="#1a6fd0" stroke-width="1.1"/><path d="M798.6 129.8h8M798.6 128.5v2.6M806.6 128.5v2.6" fill="none" stroke="#1a7fd4" stroke-width="1"/><path d="M853.4 136.6l2.5 2.3 2.5 -2.3" fill="none" stroke="#333" stroke-width="1.15"/><path d="M891.2 82.4l6.2 6.1-6.7 6h10v-1.2" fill="none" stroke="#333" stroke-width="1.1" stroke-linejoin="round"/><rect x="900" y="82.1" width="1.1" height="1.1" fill="#555"/><path d="M911 87.8l2.4 2.3 2.4 -2.3" fill="none" stroke="#333" stroke-width="1.15"/><rect x="888.3" y="106.5" width="14" height="12" fill="none" stroke="#333" stroke-width="1.1"/><path d="M888.3 109.3h14" stroke="#333" stroke-width="1"/><path d="M895.2 110.3v6M892.6 113.9l2.6 2.6 2.6-2.6" fill="none" stroke="#1a7fd4" stroke-width="1.3"/><path d="M910.5 112l2.4 2.3 2.4 -2.3" fill="none" stroke="#333" stroke-width="1.15"/><path d="M888.8 137l6.2-6.8 6.6 5.8-6.2 7z" fill="#fafafa" stroke="#a13bb5" stroke-width="1.1" stroke-linejoin="round"/><path d="M889.6 137l2.4-2.6 5 4.5-2.4 2.8z" fill="#d9a3e3"/><path d="M891.9 134.3l5.2 4.6" stroke="#a13bb5" stroke-width="0.9"/><path d="M910.5 136.5l2.4 2.3 2.4 -2.3" fill="none" stroke="#333" stroke-width="1.15"/><path d="M930.7 94l4.3-11.6 4.3 11.6M932.2 90.2h5.6" fill="none" stroke="#1a7fd4" stroke-width="1.1"/><path d="M930.6 96.8h8l-8 9.6h8.3" fill="none" stroke="#333" stroke-width="1.1" stroke-linejoin="round"/><path d="M942.5 88.3h14l-5 6.5v7.5h-4v-7.5z" fill="none" stroke="#333" stroke-width="1.1" stroke-linejoin="round"/><path d="M955.3 134.8l2.15 2.2 2.15 -2.2" fill="none" stroke="#333" stroke-width="1.15"/><circle cx="991" cy="91.3" r="9.6" fill="none" stroke="#333" stroke-width="1.1"/><path d="M984.2 98.2l-10 10" stroke="#333" stroke-width="1.1"/><path d="M1002.5 134.8l2.25 2.2 2.25 -2.2" fill="none" stroke="#333" stroke-width="1.15"/><g fill="none" stroke="#d83b01" stroke-width="1.1"><path d="M1034.5 82v25.5h25v-25.5"/><rect x="1037.6" y="84.5" width="8" height="9.1"/><rect x="1037.6" y="96.5" width="8" height="8"/><path d="M1056.8 84.5h-8.3v9.1h8.3M1056.8 96.5h-8.3v8h8.3"/></g><rect x="1092.3" y="82" width="25.2" height="3" fill="#c8c8c8"/><path d="M1092.3 82v25.5h25.2v-25.5M1092.3 85.1h25.2" fill="none" stroke="#2a2a2a" stroke-width="1.1"/><path d="M1092.3 93.4h3M1114.5 93.4h3M1092.3 99.4h25.2M1101.2 99.4v8M1109.6 99.4v8" stroke="#555" stroke-width="0.9"/><circle cx="1104.5" cy="92.3" r="7.8" fill="#fff" stroke="#2a2a2a" stroke-width="1.1"/><path d="M1109.8 98.4l7.6 8.6" stroke="#2a2a2a" stroke-width="1.2"/><path d="M1100.6 96v-4.4" stroke="#999" stroke-width="1"/><rect x="1102.5" y="87.6" width="3" height="8.4" fill="#fff" stroke="#2a2a2a" stroke-width="0.9"/><rect x="1105.8" y="89.3" width="2.9" height="6.7" fill="#9fcdf2" stroke="#1a6fd0" stroke-width="0.9"/><path d="M1175.5 151.5l4.5 4.5 4.5-4.5" fill="none" stroke="#333" stroke-width="1.1"/><path d="M88.3 182.7l4.5 4.5 4.5-4.5" fill="none" stroke="#333" stroke-width="1.1"/><rect x="111.2" y="179.6" width="2.2" height="2.2" fill="#222"/><rect x="111.2" y="183.7" width="2.2" height="2.2" fill="#222"/><rect x="111.2" y="187.8" width="2.2" height="2.2" fill="#222"/><path d="M127.2 179.5l10.8 10M138 179.5l-10.8 10" stroke="#bdbdbd" stroke-width="0.9"/><path d="M148 184.5l4 4 10-9.3" fill="none" stroke="#bdbdbd" stroke-width="0.9"/><path d="M182 178.6c-0.5-1.3-2.6-1.5-3.6 0.2-0.6 1-0.9 2.5-1.3 4.5l-1.5 6.8c-0.4 1.9-1.4 2.6-2.6 2.3l-0.7-0.4" fill="none" stroke="#2a2a2a" stroke-width="1.25"/><path d="M174.8 182.6h5" stroke="#2a2a2a" stroke-width="1.1"/><path d="M178.8 183.2c1.2-0.8 2-0.6 2.4 0.6l1.2 4.3c0.4 1.2 1.2 1.4 2.2 0.6M184.3 182.6c-1-0.3-1.8 0.4-2.6 1.8l-1.4 2.6c-0.7 1.3-1.6 1.9-2.5 1.4" fill="none" stroke="#2a2a2a" stroke-width="1.15"/><path d="M190.2 183.2l3.8 3.6 3.8-3.6" fill="none" stroke="#888" stroke-width="0.9"/><path d="M1180 182l4.2 4.5 4.2-4.5" fill="none" stroke="#333" stroke-width="1.1"/></svg>
</body></html>
